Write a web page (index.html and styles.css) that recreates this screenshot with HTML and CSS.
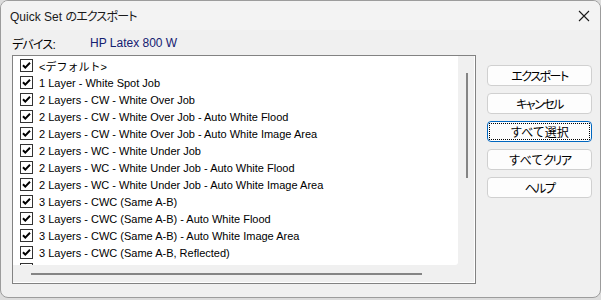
FILE: index.html
```html
<!DOCTYPE html>
<html lang="ja">
<head>
    <meta charset="UTF-8">
    <title>Quick Set のエクスポート</title>
    <link rel="stylesheet" href="styles.css">
</head>
<body>
    <div class="window">
        <div class="title-bar">
            <span class="title">Quick Set <span class="jp">のエクスポート</span></span>
            <svg class="close" width="12" height="12" viewBox="0 0 12 12">
                <path d="M1 1 L11 11 M11 1 L1 11" stroke="#1a1a1a" stroke-width="1.1" fill="none"/>
            </svg>
        </div>
        <div class="content">
            <div class="device-row">
                <span class="device-label"><span class="jp">デバイス</span>:</span>
                <span class="device-name">HP Latex 800 W</span>
            </div>
            <div class="main">
                <div class="listbox">
                    <div class="items" id="items"></div>
                    <div class="vscroll"><div class="vthumb"></div></div>
                    <div class="hscroll"><div class="hthumb"></div></div>
                    <div class="corner"></div>
                </div>
                <div class="buttons">
                    <button class="btn"><span class="kana">エクスポート</span></button>
                    <button class="btn"><span class="kana">キャンセル</span></button>
                    <button class="btn focused"><span class="focus-ring">すべて選択</span></button>
                    <button class="btn">すべて<span class="kana">クリア</span></button>
                    <button class="btn"><span class="kana">ヘルプ</span></button>
                </div>
            </div>
        </div>
    </div>

    <script>
        const names = [
            '<デフォルト>',
            '1 Layer - White Spot Job',
            '2 Layers - CW - White Over Job',
            '2 Layers - CW - White Over Job - Auto White Flood',
            '2 Layers - CW - White Over Job - Auto White Image Area',
            '2 Layers - WC - White Under Job',
            '2 Layers - WC - White Under Job - Auto White Flood',
            '2 Layers - WC - White Under Job - Auto White Image Area',
            '3 Layers - CWC (Same A-B)',
            '3 Layers - CWC (Same A-B) - Auto White Flood',
            '3 Layers - CWC (Same A-B) - Auto White Image Area',
            '3 Layers - CWC (Same A-B, Reflected)',
            ''
        ];
        const box = '<svg class="check" width="13" height="13" viewBox="0 0 13 13">' +
            '<rect x="0.5" y="0.5" width="12" height="12" fill="#fff" stroke="#333"/>' +
            '<path d="M3 6.2 L5.3 8.6 L10 3.8" stroke="#000" stroke-width="2" fill="none"/></svg>';
        const list = document.getElementById('items');
        names.forEach(function (n) {
            const row = document.createElement('div');
            row.className = 'item';
            row.innerHTML = box;
            if (n) {
                const label = document.createElement('span');
                label.textContent = n;
                row.appendChild(label);
            }
            list.appendChild(row);
        });
    </script>
</body>
</html>
```

FILE: styles.css
```css
body {
    margin: 0;
    background-color: #dcdcdc;
    font-family: 'Liberation Sans', 'Noto Sans CJK JP', sans-serif;
    font-size: 12px;
    color: #000;
}
.jp {
    font-family: 'Noto Sans CJK JP', sans-serif;
    font-feature-settings: "palt";
    letter-spacing: -0.8px;
}
.window {
    box-sizing: border-box;
    width: 601px;
    height: 298px;
    border: 1px solid #9c9c9c;
    border-radius: 8px;
    background-color: #f0f0f0;
    overflow: hidden;
}
.title-bar {
    height: 29px;
    background-color: #f3f3f3;
    display: flex;
    align-items: center;
    justify-content: space-between;
    padding: 0 10px 0 9px;
}
.title {
    font-size: 12px;
    color: #1a1a1a;
}
.content {
    padding: 0 8px 0 11px;
}
.device-row {
    height: 25px;
    display: flex;
    align-items: center;
    padding-top: 1px;
    box-sizing: border-box;
}
.device-label {
    width: 78px;
}
.device-name {
    color: #142070;
}
.main {
    display: flex;
    gap: 11px;
}
.listbox {
    box-sizing: border-box;
    width: 464px;
    height: 229px;
    border: 1px solid #828282;
    box-shadow: inset -1px -1px 0 #fff;
    display: grid;
    grid-template-columns: 1fr 17px;
    grid-template-rows: 1fr 18px;
    background-color: #f0f0f0;
}
.items {
    background-color: #fff;
    overflow: hidden;
    padding: 1px 0 0 7px;
    border-bottom-right-radius: 3px;
}
.item {
    height: 17px;
    display: flex;
    align-items: center;
    gap: 6px;
    white-space: nowrap;
    font-size: 11px;
}
.check {
    flex: none;
}
.vscroll {
    display: flex;
    justify-content: center;
    padding-top: 17px;
}
.vthumb {
    width: 2px;
    height: 105px;
    background-color: #858585;
}
.hscroll {
    padding: 8px 0 0 18px;
}
.hthumb {
    width: 391px;
    height: 2px;
    background-color: #858585;
}
.buttons {
    display: flex;
    flex-direction: column;
    gap: 7px;
    padding-top: 10px;
}
.btn {
    width: 105px;
    height: 21px;
    border: 1px solid #d0d0d0;
    border-radius: 4px;
    background-color: #fdfdfd;
    font-family: 'Noto Sans CJK JP', sans-serif;
    font-size: 12px;
    color: #000;
    padding: 0;
    display: flex;
    align-items: center;
    justify-content: center;
}
.kana {
    font-feature-settings: "palt";
    letter-spacing: -1.5px;
}
.btn.focused {
    border: 1px solid #0067c0;
    padding: 1px;
}
.focus-ring {
    flex: 1;
    align-self: stretch;
    border: 1px dotted #000;
    display: flex;
    align-items: center;
    justify-content: center;
}
```
